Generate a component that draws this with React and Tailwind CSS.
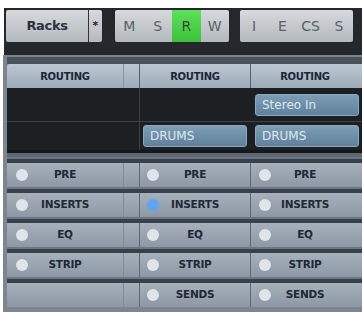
import React from "react";

const font = { fontFamily: '"DejaVu Sans", "Liberation Sans", sans-serif' };

function ToolCell({ label, active }) {
  return (
    <div
      className={
        "flex h-full flex-1 items-center justify-center text-[14px] " +
        (active
          ? "bg-gradient-to-b from-[#5ee05a] to-[#3cc23a] text-[#2c4a2c]"
          : "text-[#5a6168]")
      }
    >
      {label}
    </div>
  );
}

function Toolbar() {
  return (
    <div className="ml-[4px] flex h-[47px] w-[358px] items-start bg-[#24282c] pl-[2px] pt-[2px]">
      <div className="flex h-[32px] w-[96px] overflow-hidden rounded-[2px] bg-gradient-to-b from-[#d6dadd] to-[#b4b9be]">
        <div className="flex w-[82px] items-center justify-center text-[13px] font-bold tracking-tight text-[#2a323c]">
          Racks
        </div>
        <div className="w-px bg-[#30343a]" />
        <div className="flex flex-1 items-center justify-center text-[11px] font-bold text-[#1e242a]">
          *
        </div>
      </div>
      <div className="ml-[13px] flex h-[32px] w-[114px] overflow-hidden rounded-[2px] bg-gradient-to-b from-[#d6dadd] to-[#b4b9be]">
        <ToolCell label="M" />
        <ToolCell label="S" />
        <ToolCell label="R" active />
        <ToolCell label="W" />
      </div>
      <div className="ml-[11px] flex h-[32px] w-[113px] overflow-hidden rounded-[2px] bg-gradient-to-b from-[#d6dadd] to-[#b4b9be]">
        <ToolCell label="I" />
        <ToolCell label="E" />
        <ToolCell label="CS" />
        <ToolCell label="S" />
      </div>
    </div>
  );
}

function Header() {
  const cell =
    "flex h-full items-center justify-center text-[10px] font-bold tracking-tight text-[#1c2633]";
  return (
    <div className="flex h-[24px] rounded-tl-[3px] bg-gradient-to-b from-[#bcc7d2] to-[#9eabb8]">
      <div className={cell + " w-[116px]"}>ROUTING</div>
      <div className="h-full w-[16px] border-l border-[#8794a0]" />
      <div className={cell + " w-[111px] border-l border-[#56616c]"}>ROUTING</div>
      <div className={cell + " w-[109px] border-l border-[#56616c]"}>ROUTING</div>
    </div>
  );
}

function BlueButton({ label }) {
  return (
    <div className="flex h-[22px] w-full items-center rounded-[3px] border border-[#8aa8bf] bg-gradient-to-b from-[#7d9db5] to-[#5f8199] pl-[6px] text-[12px] text-[#dfe8f0]">
      {label}
    </div>
  );
}

function DarkRow({ h, col2, col3 }) {
  return (
    <div className="flex bg-[#1d2023]" style={{ height: h }}>
      <div className="w-[132px]" />
      <div className="flex w-[111px] items-center border-l border-[#3a4046] px-[3px]">
        {col2 && <BlueButton label={col2} />}
      </div>
      <div className="flex w-[109px] items-center pl-[5px]">
        {col3 && <BlueButton label={col3} />}
      </div>
    </div>
  );
}

function Dot({ on }) {
  return (
    <div
      className={
        "h-[12px] w-[12px] shrink-0 rounded-full " +
        (on ? "bg-[#5ea4f2]" : "bg-[#dfe5eb]")
      }
    />
  );
}

function ButtonRow({ c1, c2, c3, on2 }) {
  const label = "text-[10.5px] font-bold tracking-tight text-[#1e2836]";
  return (
    <div className="flex flex-col">
      <div className="h-[2px] bg-[#6c7783]" />
      <div className="h-[4px] bg-[#37414b]" />
      <div className="flex h-[24px] bg-gradient-to-b from-[#a6b1bc] to-[#8d98a4]">
        <div className="relative flex h-full w-[116px] items-center justify-center">
          {c1 && (
            <>
              <div className="absolute left-[9px] top-[6px]">
                <Dot />
              </div>
              <span className={label}>{c1}</span>
            </>
          )}
        </div>
        <div className="h-full w-[16px] border-l border-[#808b97]" />
        <div className="relative flex h-full w-[111px] items-center justify-center border-l border-[#5d6873]">
          <div className="absolute left-[7px] top-[6px]">
            <Dot on={on2} />
          </div>
          <span className={label}>{c2}</span>
        </div>
        <div className="relative flex h-full w-[109px] items-center justify-center border-l border-[#5d6873]">
          <div className="absolute left-[8px] top-[6px]">
            <Dot />
          </div>
          <span className={label}>{c3}</span>
        </div>
      </div>
    </div>
  );
}

export default function App() {
  const rows = [
    { c1: "PRE", c2: "PRE", c3: "PRE" },
    { c1: "INSERTS", c2: "INSERTS", c3: "INSERTS", on2: true },
    { c1: "EQ", c2: "EQ", c3: "EQ" },
    { c1: "STRIP", c2: "STRIP", c3: "STRIP" },
    { c1: "", c2: "SENDS", c3: "SENDS" },
  ];
  return (
    <div className="h-[312px] w-[362px] overflow-hidden bg-white pt-[8px]" style={font}>
      <Toolbar />
      <div className="ml-[3px] h-[257px] w-[359px] bg-[#7d868f] pl-[4px] pt-[2px]">
        <div className="h-[7px] bg-[#4a525a]" />
        <Header />
        <DarkRow h={33} col3="Stereo In" />
        <div className="h-px bg-[#3c4248]" />
        <DarkRow h={28} col2="DRUMS" col3="DRUMS" />
        <div className="h-[3px] bg-[#15181b]" />
        <div className="h-[4px] bg-[#5d6872]" />
        {rows.map((r, i) => (
          <ButtonRow key={i} {...r} />
        ))}
      </div>
    </div>
  );
}
